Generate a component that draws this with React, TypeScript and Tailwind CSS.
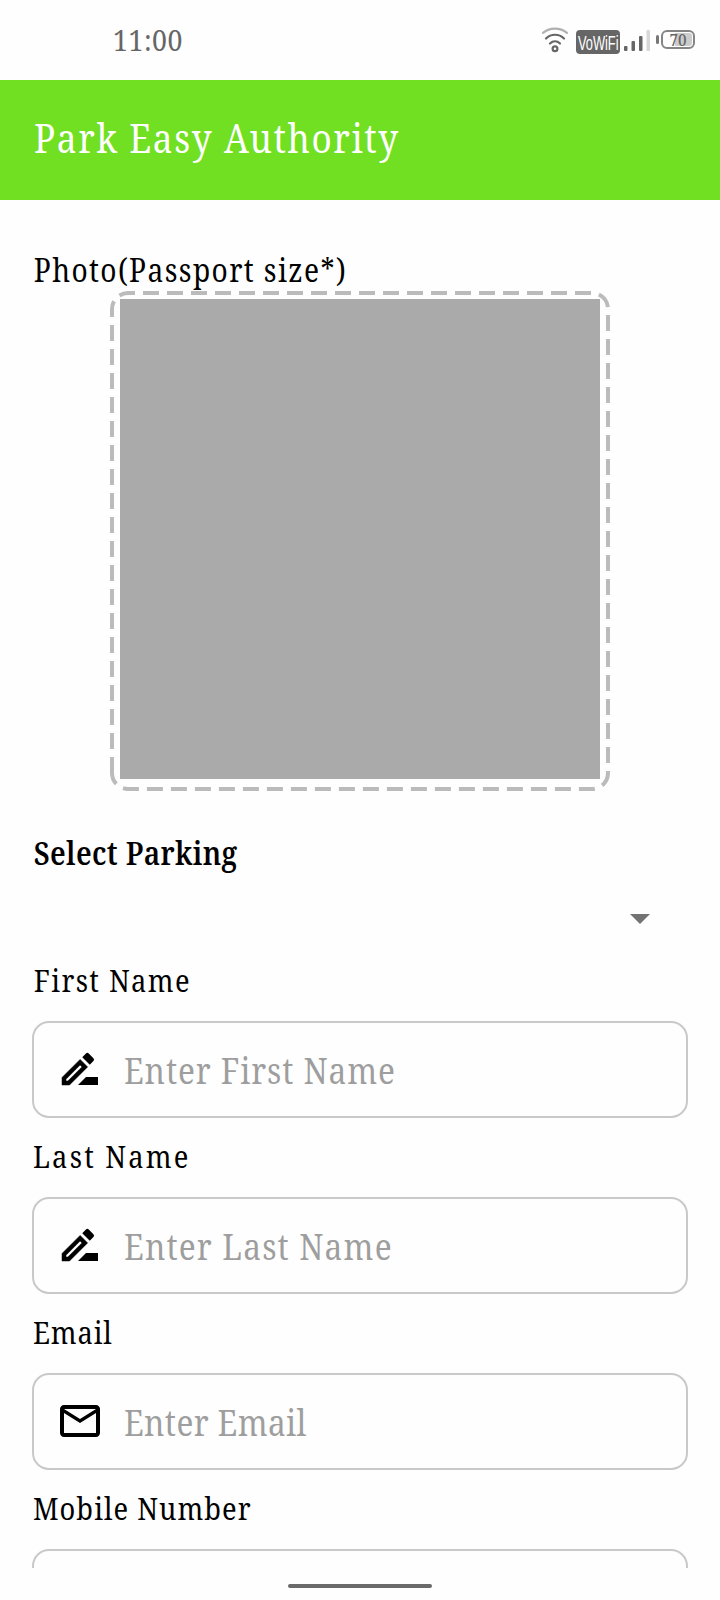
import React from "react";

function WifiIcon() {
  return (
    <svg className="h-[26px] w-[28px]" viewBox="0 0 28 26" fill="none" strokeWidth="2.200" strokeLinecap="round">
      <path d="M2 5.800C9 .200 19 .200 26 5.800" stroke="#b0b0b0" />
      <path d="M5 11.500c5-5 13-5 18 0" stroke="#666" />
      <path d="M9 16.500c3-2.800 7-2.800 10 0" stroke="#666" />
      <circle cx="14" cy="21.700" r="2.400" stroke="#666" />
    </svg>
  );
}

function StatusBar() {
  return (
    <div className="flex h-20 shrink-0 items-start text-[#666]">
      <div className="ml-[113px] mt-[20px] h-10 flex-1 origin-left scale-x-[0.92] text-[29px] leading-10 tracking-[0.6px]">
        11:00
      </div>
      <div className="mt-[27px] flex">
        <WifiIcon />
        <div className="ml-[7px] mt-[3px] flex h-[24px] w-[44px] items-center justify-center rounded-[4px] bg-[#666] font-['Liberation_Sans',sans-serif] text-white">
          <span className="block shrink-0 scale-x-[0.61] pt-[2px] text-[21px] leading-[24px]">VoWiFi</span>
        </div>
        <svg className="ml-[4px] mt-[3px] h-[21px] w-[27px]" viewBox="0 0 27 21">
          <rect x="0" y="16" width="3.500" height="5" rx="1" fill="#666" />
          <rect x="7.500" y="11" width="3.500" height="10" rx="1" fill="#666" />
          <rect x="15" y="6" width="3.500" height="15" rx="1" fill="#666" />
          <rect x="22.500" y="0" width="3.500" height="21" rx="1" fill="#d8d8d8" />
        </svg>
        <div className="ml-[5px] mt-[8px] h-[9px] w-[2.5px] rounded-full bg-[#777]" />
        <div className="ml-[2.5px] mt-[3px] mr-[25px] flex h-[19px] w-[34px] rounded-[6px] border-2 border-[#858585] p-[1px]">
          <div className="flex h-full w-full items-center justify-center rounded-[3px] bg-linear-to-r from-transparent from-40% to-[#ccc] to-40%">
            <span className="block scale-x-[0.95] pr-[1px] text-[16px] leading-[16px] font-medium">70</span>
          </div>
        </div>
      </div>
    </div>
  );
}

function PhotoPicker() {
  return (
    <div className="mx-auto grid h-[500px] w-[500px] shrink-0 place-items-center">
      <svg className="col-start-1 row-start-1 h-[500px] w-[500px]" viewBox="0 0 500 500" fill="none">
        <path
          d="M2 482V18A16 16 0 0 1 18 2H482A16 16 0 0 1 498 18V482A16 16 0 0 1 482 498H18A16 16 0 0 1 2 482Z"
          stroke="#bbb"
          strokeWidth="4"
          strokeDasharray="16 8"
        />
      </svg>
      <div className="col-start-1 row-start-1 mb-[4px] h-[480px] w-[480px] bg-[#aaa]" />
    </div>
  );
}

function PencilIcon() {
  return (
    <svg className="mb-[2px] h-12 w-12 shrink-0" viewBox="0 0 24 24" fill="#000">
      <path d="M15 16l-4 4h10v-4z" />
      <path
        d="M12.060 7.190L3 16.250V20h3.750l9.060-9.060-3.750-3.750zM5.920 18H5v-.920l7.060-7.060.920.920L5.920 18z"
        stroke="#000"
        strokeWidth=".25"
      />
      <path d="M18.710 8.040a.996.996 0 0 0 0-1.410l-2.340-2.340a.996.996 0 0 0-1.410 0l-1.830 1.830 3.750 3.750 1.830-1.830z" />
    </svg>
  );
}

function MailIcon() {
  return (
    <svg className="mb-[2px] h-12 w-12 shrink-0" viewBox="0 0 24 24" fill="#000">
      <path d="M20 4H4c-1.100 0-1.990.900-1.990 2L2 18c0 1.100.900 2 2 2h16c1.100 0 2-.900 2-2V6c0-1.100-.900-2-2-2zm0 14H4V8l8 5 8-5v10zm-8-7L4 6h16l-8 5z" />
    </svg>
  );
}

type FieldProps = {
  label: string;
  labelClass: string;
  placeholder?: string;
  inputClass?: string;
  icon?: React.ReactNode;
};

function Field({ label, labelClass, placeholder = "", inputClass = "", icon }: FieldProps) {
  return (
    <div className="h-[176px] shrink-0">
      <div className={`h-[54px] origin-left scale-x-[0.88] text-[31px] leading-[54px] text-black ${labelClass}`}>
        {label}
      </div>
      <div className="mt-[14px] flex h-[97px] items-center rounded-[17px] border-2 border-[#c9c9c9] pl-[22px]">
        {icon}
        <input
          className={`ml-[20px] mt-[2px] h-[60px] min-w-0 flex-1 origin-left scale-x-[0.88] bg-transparent text-[36px] outline-none placeholder:text-[#9e9e9e] ${inputClass}`}
          placeholder={placeholder}
        />
      </div>
    </div>
  );
}

export default function App() {
  return (
    <div className="flex h-[1600px] w-[720px] flex-col overflow-hidden bg-[#fefefe] font-['Noto_Serif','Liberation_Serif',serif]">
      <StatusBar />
      <header className="flex h-[120px] shrink-0 items-center bg-[#72e022] pl-[34px]">
        <h1 className="mb-[5px] origin-left scale-x-[0.88] whitespace-nowrap text-[40px] leading-[60px] tracking-[1.8px] text-white">
          Park Easy Authority
        </h1>
      </header>
      <main className="flex h-[1368px] shrink-0 flex-col overflow-hidden px-[32px]">
        <div className="mt-[46px] h-[45px] shrink-0 origin-left scale-x-[0.88] whitespace-nowrap pl-[2px] text-[32px] leading-[48px] tracking-[1.57px] text-black">
          Photo(Passport size*)
        </div>
        <PhotoPicker />
        <div className="mt-[37px] h-[50px] shrink-0 origin-left scale-x-[0.88] pl-[2px] text-[32px] font-semibold leading-[50px] tracking-[0.4px] text-black">
          Select Parking
        </div>
        <div className="flex h-[75px] shrink-0 justify-end pr-[38px] pt-[36px]">
          <svg className="h-[10px] w-[20px]" viewBox="0 0 20 10">
            <path d="M0 0h20L10 10z" fill="#737373" />
          </svg>
        </div>
        <Field
          label="First Name"
          labelClass="pl-[2px] tracking-[1.6px]"
          placeholder="Enter First Name"
          inputClass="tracking-[1px]"
          icon={<PencilIcon />}
        />
        <Field
          label="Last Name"
          labelClass="pl-[1px] tracking-[2.5px]"
          placeholder="Enter Last Name"
          inputClass="tracking-[1.3px]"
          icon={<PencilIcon />}
        />
        <Field
          label="Email"
          labelClass="pl-[1px] tracking-[1px]"
          placeholder="Enter Email"
          inputClass="tracking-[0.4px]"
          icon={<MailIcon />}
        />
        <Field label="Mobile Number" labelClass="pl-[1px] tracking-[1.2px]" />
      </main>
      <footer className="flex h-8 shrink-0 justify-center pt-4">
        <div className="h-1 w-36 rounded-full bg-[#6a6a6a]" />
      </footer>
    </div>
  );
}
